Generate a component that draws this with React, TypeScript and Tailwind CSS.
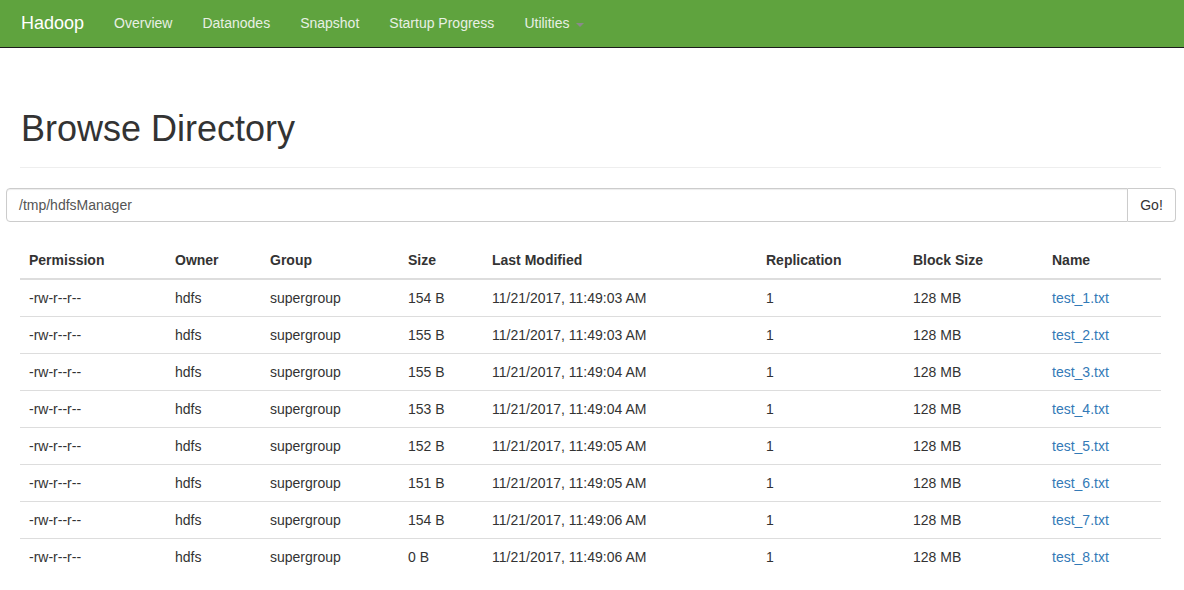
const navItems = ["Overview", "Datanodes", "Snapshot", "Startup Progress"];

const rows = [
  { size: "154 B", time: "11:49:03 AM" },
  { size: "155 B", time: "11:49:03 AM" },
  { size: "155 B", time: "11:49:04 AM" },
  { size: "153 B", time: "11:49:04 AM" },
  { size: "152 B", time: "11:49:05 AM" },
  { size: "151 B", time: "11:49:05 AM" },
  { size: "154 B", time: "11:49:06 AM" },
  { size: "0 B", time: "11:49:06 AM" },
];

const columns = [
  { label: "Permission", w: "w-[146px]" },
  { label: "Owner", w: "w-[95px]" },
  { label: "Group", w: "w-[138px]" },
  { label: "Size", w: "w-[84px]" },
  { label: "Last Modified", w: "w-[274px]" },
  { label: "Replication", w: "w-[147px]" },
  { label: "Block Size", w: "w-[139px]" },
  { label: "Name", w: "" },
];

export default function App() {
  return (
    <div className="min-h-[590px] bg-white text-[14px] text-[#333] font-['Liberation_Sans',Arial,sans-serif]">
      {/* navbar */}
      <nav className="h-[48px] bg-[#5fa33e] border-b border-[#1c1c1c] flex items-center">
        <span className="pl-[21px] pr-[15px] text-[18px] text-white">Hadoop</span>
        <ul className="flex">
          {navItems.map((n) => (
            <li key={n} className="px-[15px] text-[#e8f0e4]">
              {n}
            </li>
          ))}
          <li className="px-[15px] text-[#e8f0e4] flex items-center">
            Utilities
            <span className="ml-[6px] mt-[2px] w-0 h-0 border-l-[4px] border-r-[4px] border-t-[4px] border-l-transparent border-r-transparent border-t-[#8a8a8a]" />
          </li>
        </ul>
      </nav>

      <div className="px-[20px] pt-[61px]">
        <h1 className="text-[36px] leading-[40px] text-[#333] pl-[1px] pb-[18px] border-b border-[#eee] mr-[3px]">
          Browse Directory
        </h1>
      </div>

      {/* path input */}
      <div className="mt-[20px] mx-[8px] ml-[6px] flex h-[34px]">
        <div className="flex-1 border border-[#ccc] rounded-l-[4px] px-[12px] flex items-center text-[#555] shadow-[inset_0_1px_1px_rgba(0,0,0,0.075)]">
          /tmp/hdfsManager
        </div>
        <button className="w-[48px] border border-l-0 border-[#ccc] rounded-r-[4px] bg-white text-[#333]">
          Go!
        </button>
      </div>

      {/* listing */}
      <div className="px-[20px] mt-[20px]">
        <table className="w-[1141px] border-collapse text-left">
          <thead>
            <tr className="border-b-2 border-[#ddd]">
              {columns.map((c) => (
                <th key={c.label} className={`${c.w} pl-[9px] pr-[7px] py-[8px] font-bold leading-[20px]`}>
                  {c.label}
                </th>
              ))}
            </tr>
          </thead>
          <tbody>
            {rows.map((r, i) => (
              <tr key={i} className={i > 0 ? "border-t border-[#ddd]" : ""}>
                <td className="pl-[9px] pr-[7px] py-[8px] leading-[20px]">-rw-r--r--</td>
                <td className="pl-[9px] pr-[7px] py-[8px] leading-[20px]">hdfs</td>
                <td className="pl-[9px] pr-[7px] py-[8px] leading-[20px]">supergroup</td>
                <td className="pl-[9px] pr-[7px] py-[8px] leading-[20px]">{r.size}</td>
                <td className="pl-[9px] pr-[7px] py-[8px] leading-[20px]">11/21/2017, {r.time}</td>
                <td className="pl-[9px] pr-[7px] py-[8px] leading-[20px]">1</td>
                <td className="pl-[9px] pr-[7px] py-[8px] leading-[20px]">128 MB</td>
                <td className="pl-[9px] pr-[7px] py-[8px] leading-[20px]">
                  <a className="text-[#337ab7]">test_{i + 1}.txt</a>
                </td>
              </tr>
            ))}
          </tbody>
        </table>
      </div>
    </div>
  );
}
